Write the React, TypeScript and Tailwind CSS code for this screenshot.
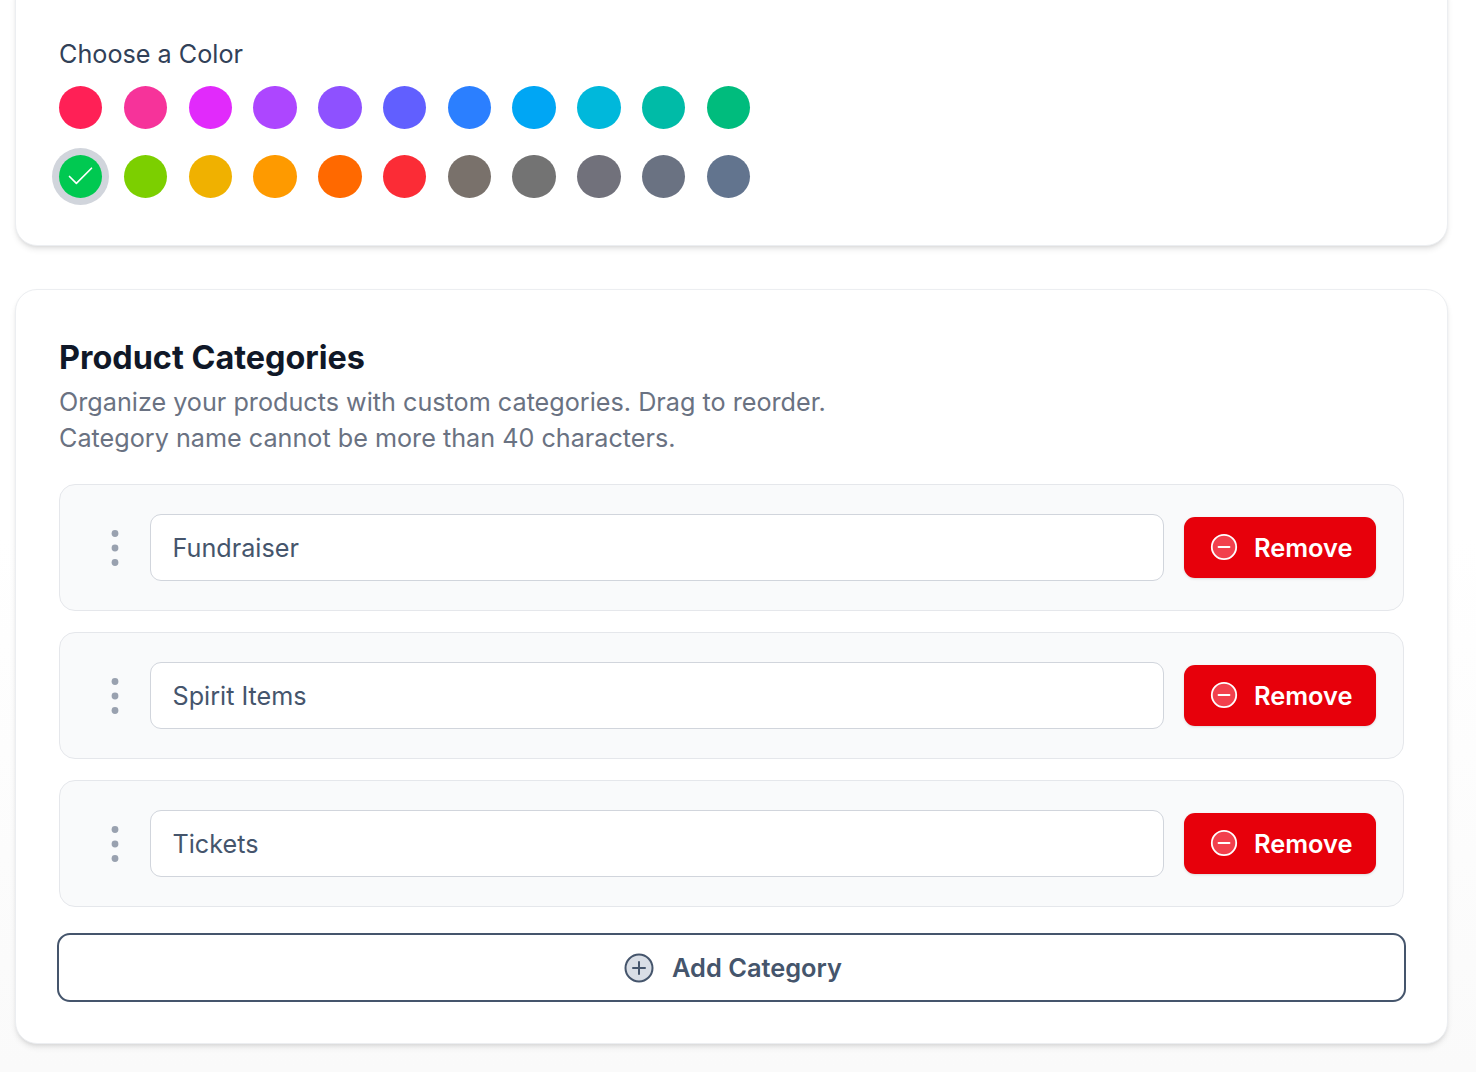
import { Check } from "lucide-react"

const colorRows = [
  ["bg-rose-500", "bg-pink-500", "bg-fuchsia-500", "bg-purple-500", "bg-violet-500", "bg-indigo-500", "bg-blue-500", "bg-sky-500", "bg-cyan-500", "bg-teal-500", "bg-emerald-500"],
  ["bg-green-500", "bg-lime-500", "bg-yellow-500", "bg-amber-500", "bg-orange-500", "bg-red-500", "bg-stone-500", "bg-neutral-500", "bg-zinc-500", "bg-gray-500", "bg-slate-500"],
]

const categories = ["Fundraiser", "Spirit Items", "Tickets"]

const MinusIcon = () => (
  <svg width="28" height="28" viewBox="0 0 28 28" fill="none" className="-mt-[4px] shrink-0">
    <circle cx="14" cy="14" r="12.2" fill="#f2404d" stroke="white" strokeWidth="1.8" />
    <path d="M8.5 14h11" stroke="white" strokeWidth="1.8" strokeLinecap="round" />
  </svg>
)

const PlusIcon = () => (
  <svg width="30" height="30" viewBox="0 0 30 30" fill="none" className="shrink-0">
    <circle cx="15" cy="15" r="13.5" fill="#d9dee6" stroke="#45556c" strokeWidth="2" />
    <path d="M15 9v12M9 15h12" stroke="#45556c" strokeWidth="2" strokeLinecap="round" />
  </svg>
)

const DragDots = () => (
  <svg width="8" height="38" viewBox="0 0 8 38" className="shrink-0">
    <circle cx="4" cy="4.5" r="3.4" fill="#99a1af" />
    <circle cx="4" cy="19" r="3.4" fill="#99a1af" />
    <circle cx="4" cy="33.5" r="3.4" fill="#99a1af" />
  </svg>
)

export default function App() {
  return (
    <div className="h-[1072px] overflow-hidden bg-gradient-to-b from-white via-white to-[#fafafa] pl-[15px] font-['Inter',sans-serif]">
      <div className="-mt-6 h-[270px] w-[1433px] rounded-[22px] border border-[#eceef1] bg-white pl-[43px] pt-[57px] shadow-md">
        <h3 className="text-[25.2px] leading-[40px] text-[#314158]">Choose a Color</h3>
        <div className="mt-[12px] flex flex-col gap-[25.4px]">
          {colorRows.map((row, i) => (
            <div key={i} className="flex gap-[21.4px]">
              {row.map((color, j) => (
                <div
                  key={color}
                  className={`flex size-[43.4px] items-center justify-center rounded-full ${color} ${i === 1 && j === 0 ? "ring-[7px] ring-gray-300" : ""}`}
                >
                  {i === 1 && j === 0 && <Check size={33} strokeWidth={1.2} color="white" className="shrink-0" />}
                </div>
              ))}
            </div>
          ))}
        </div>
      </div>

      <div className="mt-[43px] h-[755px] w-[1433px] rounded-[22px] border border-[#eceef1] bg-white pl-[43px] pr-[42px] pt-[46px] shadow-md">
        <h2 className="text-[32.4px] font-bold leading-[44px] text-[#101828]">Product Categories</h2>
        <p className="mt-[4px] text-[25.2px] leading-[36px] text-[#6a7282]">
          Organize your products with custom categories. Drag to reorder.
          <br />
          Category name cannot be more than 40 characters.
        </p>
        <div className="mt-[28px] flex flex-col gap-[21px]">
          {categories.map((name) => (
            <div key={name} className="mr-[1px] flex h-[127px] items-center rounded-[16px] border border-[#e5e7eb] bg-[#f9fafb] pl-[51px] pr-[27px]">
              <DragDots />
              <input
                defaultValue={name}
                className="ml-[31px] h-[67px] flex-1 rounded-[11px] border border-[#d1d5dc] bg-white px-[21.5px] text-[25.2px] text-[#45556c] outline-none"
              />
              <button className="ml-[20px] flex h-[61px] w-[192px] items-center gap-[16px] rounded-[11px] bg-[#e7000b] pl-[26px] pt-[2px] text-[25.4px] font-semibold text-white shadow-sm">
                <MinusIcon />
                Remove
              </button>
            </div>
          ))}
        </div>
        <button className="-ml-[2px] mt-[26px] flex h-[69px] w-[1349px] items-center justify-center gap-[18px] rounded-[13px] border-2 border-[#45556c] bg-white pl-[3px] text-[25.4px] font-semibold text-[#45556c]">
          <PlusIcon />
          <span className="pt-[2px]">Add Category</span>
        </button>
      </div>
    </div>
  )
}
